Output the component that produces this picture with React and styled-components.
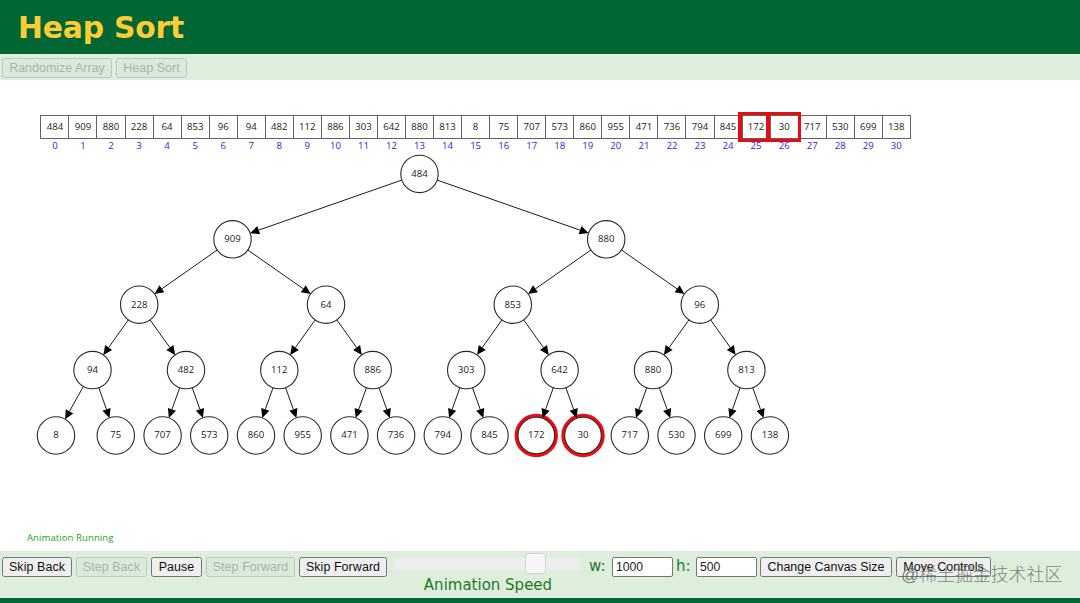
import React from 'react';
import styled, { createGlobalStyle } from 'styled-components'


const GlobalStyle = createGlobalStyle`
  * { box-sizing: border-box; }
  body {
    margin: 0;
    background: #ffffff;
    overflow: hidden;
  }
`;

const Page = styled.div`
  display: flex;
  flex-direction: column;
  width: 1080px;
  height: 603px;
  font-family: "DejaVu Sans", Verdana, sans-serif;
`;

const Header = styled.header`
  flex: none;
  height: 54px;
  padding-left: 18px;
  background: #006633;
`;

const Title = styled.h1`
  margin: 0;
  color: #ffcc33;
  font-size: 29.8px;
  line-height: 55px;
  letter-spacing: -0.2px;
`;

const Toolbar = styled.div`
  display: flex;
  flex: none;
  gap: 4px;
  height: 26px;
  padding: 4px 2px;
  background: #ddeedd;
`;

const Button = styled.button`
  flex: none;
  width: ${props => props.$width}px;
  height: 20px;
  margin: 0;
  padding: 0;
  border: 1px solid #767676;
  border-radius: 2.5px;
  background: #efefef;
  color: #111111;
  font-family: "Liberation Sans", Arial, sans-serif;
  font-size: 12.45px;
  line-height: 17px;
  letter-spacing: ${props => props.$spacing || 0.08}px;
  white-space: nowrap;
  &:disabled {
    border-color: #bccabc;
    background: #dae9da;
    color: #a9b4a9;
  }
`;

const Canvas = styled.main`
  display: flex;
  flex-direction: column;
  flex: none;
  height: 471px;
  padding-top: 35px;
  font-family: "Open Sans", "Noto Sans", sans-serif;
  font-size: 9.6px;
`;

const ArrayRow = styled.div`
  display: flex;
  flex: none;
  height: 38px;
  padding-left: 40.4px;
`;

const Slot = styled.div`
  position: relative;
  flex: none;
  width: 28.06px;
  text-align: center;
`;

const Value = styled.div`
  width: 29.06px;
  height: 24px;
  border: 1px solid #626262;
  color: #222222;
  line-height: 21px;
`;

const Index = styled.div`
  width: 29.06px;
  color: #3322ee;
  line-height: 13.5px;
`;

const Marker = styled.div`
  position: absolute;
  top: -3px;
  left: -3.5px;
  z-index: 1;
  width: ${props => props.$width}px;
  height: 30px;
  border: 3px solid #e80c10;
  border-left-width: 4px;
`;

const Tree = styled.svg`
  display: block;
  flex: none;
  width: 1080px;
  height: 377px;
`;

const Status = styled.div`
  padding-left: 27px;
  color: #1fa52b;
  font-size: 9.6px;
  line-height: 16px;
  letter-spacing: 0.05px;
`;

const Controls = styled.footer`
  display: flex;
  flex: none;
  align-items: flex-start;
  height: 47px;
  padding: 6px 0 0 2px;
  background: #ddeedd;
  color: #1f7a1f;
`;

const ButtonGroup = styled.div`
  display: flex;
  flex: none;
  gap: 4px;
  margin-left: ${props => props.$indent || 0}px;
`;

const Speed = styled.div`
  flex: none;
  width: 187px;
  margin-left: 7px;
  text-align: center;
`;

const Track = styled.div`
  position: relative;
  height: 14px;
  border: 1px solid #e6eae6;
  border-radius: 3px;
  background: #ededed;
`;

const Thumb = styled.div`
  position: absolute;
  top: -5px;
  left: 130px;
  width: 21px;
  height: 21px;
  border: 1px solid #d3d3d3;
  border-radius: 4px;
  background: #f6f6f6;
`;

const SpeedLabel = styled.div`
  margin-top: 4px;
  padding-left: 1px;
  font-size: 15px;
  line-height: 20px;
`;

const SizeLabel = styled.label`
  flex: none;
  width: ${props => props.$width}px;
  padding-left: ${props => props.$indent}px;
  font-size: 15px;
  line-height: 19px;
`;

const SizeInput = styled.input`
  flex: none;
  width: 61px;
  height: 20px;
  margin: 0;
  padding: 0 3px;
  border: 1px solid #767676;
  border-radius: 2px;
  background: #ffffff;
  color: #222222;
  font-family: "Liberation Sans", Arial, sans-serif;
  font-size: 12.2px;
`;

const Watermark = styled.div`
  position: absolute;
  top: 563px;
  left: 901px;
  color: rgba(90, 105, 90, 0.8);
  font-family: "Liberation Sans", "Noto Sans CJK SC", sans-serif;
  font-size: 17.9px;
  font-weight: 300;
  line-height: 25px;
  white-space: nowrap;
`;

const Bottom = styled.div`
  flex: 1;
  background: #006633;
`;

const values = [
  484, 909, 880, 228, 64, 853, 96, 94, 482, 112, 886, 303, 642, 880, 813, 8,
  75, 707, 573, 860, 955, 471, 736, 794, 845, 172, 30, 717, 530, 699, 138
];

// index -> width of its marker, the right one overlaps the left one
const compared = { 25: 32, 26: 35 };

const RADIUS = 18.7;

const xs = [
  419.5,
  232.5, 606.2,
  139.2, 326, 512.8, 699.8,
  92.5, 186, 279.3, 372.7, 466.2, 559.6, 653, 746.4,
  56, 115.8, 162.6, 209.2, 256, 302.7, 349.4, 396.1,
  442.8, 489.5, 536.3, 583, 629.8, 676.5, 723.2, 769.9
];

// y is relative to the tree, which starts below the array
const nodes = values.map((value, i) => ({
  value,
  x: xs[i],
  y: 20.9 + Math.floor(Math.log2(i + 1)) * 65.4
}));

const Edge = ({ from, to }) => {
  const dx = to.x - from.x;
  const dy = to.y - from.y;
  const length = Math.hypot(dx, dy);
  const ux = dx / length;
  const uy = dy / length;
  const tipX = to.x - ux * RADIUS;
  const tipY = to.y - uy * RADIUS;
  const baseX = tipX - ux * 9;
  const baseY = tipY - uy * 9;

  return (
    <g>
      <line x1={from.x + ux * RADIUS} y1={from.y + uy * RADIUS} x2={baseX} y2={baseY} stroke="#1a1a1a" strokeWidth="1" />
      <polygon
        points={`${tipX},${tipY} ${baseX - uy * 4.3},${baseY + ux * 4.3} ${baseX + uy * 4.3},${baseY - ux * 4.3}`}
        fill="#000"
      />
    </g>
  );
};

class App extends React.Component {
  render = () => {
    return (
      <Page>
        <GlobalStyle />
        <Header>
          <Title>Heap Sort</Title>
        </Header>
        <Toolbar>
          <Button $width={110} $spacing={0.02} disabled>Randomize Array</Button>
          <Button $width={71} disabled>Heap Sort</Button>
        </Toolbar>
        <Canvas>
          <ArrayRow>
            {values.map((value, i) => (
              <Slot key={i}>
                <Value>{value}</Value>
                <Index>{i}</Index>
                {compared[i] && <Marker $width={compared[i]} />}
              </Slot>
            ))}
          </ArrayRow>
          <Tree viewBox="0 0 1080 377">
            {nodes.map((node, i) => (
              <g key={i}>
                {compared[i] && (
                  <circle cx={node.x} cy={node.y} r="19.9" fill="none" stroke="#ee0a10" strokeWidth="3.6" />
                )}
                <circle
                  cx={node.x}
                  cy={node.y}
                  r={compared[i] ? 18.3 : RADIUS}
                  fill="#fff"
                  stroke="#2a2a2a"
                  strokeWidth="1.1"
                />
                <text x={node.x} y={node.y + 2.8} textAnchor="middle" fill="#222">{node.value}</text>
              </g>
            ))}
            {nodes.slice(1).map((node, i) => (
              <Edge key={i} from={nodes[i >> 1]} to={node} />
            ))}
          </Tree>
          <Status>Animation Running</Status>
        </Canvas>
        <Controls>
          <ButtonGroup>
            <Button $width={70}>Skip Back</Button>
            <Button $width={71} disabled>Step Back</Button>
            <Button $width={51}>Pause</Button>
            <Button $width={89} disabled>Step Forward</Button>
            <Button $width={88}>Skip Forward</Button>
          </ButtonGroup>
          <Speed>
            <Track>
              <Thumb />
            </Track>
            <SpeedLabel>Animation Speed</SpeedLabel>
          </Speed>
          <SizeLabel $width={31} $indent={8} htmlFor="w">w:</SizeLabel>
          <SizeInput id="w" defaultValue="1000" />
          <SizeLabel $width={23} $indent={3} htmlFor="h">h:</SizeLabel>
          <SizeInput id="h" defaultValue="500" />
          <ButtonGroup $indent={3}>
            <Button $width={132} $spacing={0.01}>Change Canvas Size</Button>
            <Button $width={95} $spacing={0.01}>Move Controls</Button>
          </ButtonGroup>
        </Controls>
        <Bottom />
        <Watermark>@稀土掘金技术社区</Watermark>
      </Page>
    );
  };
}

export default App;
